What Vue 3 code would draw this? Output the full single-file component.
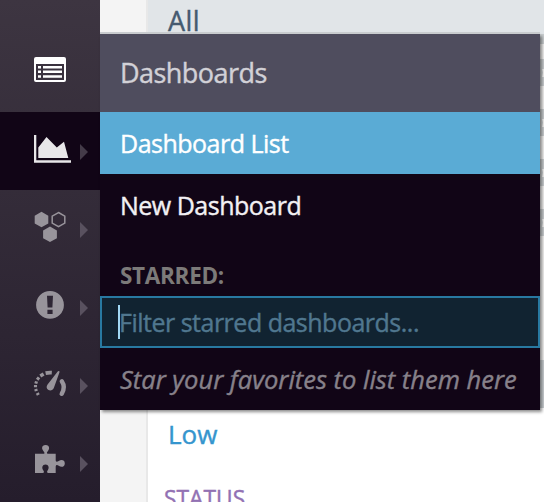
<script setup>
const items = [
  { id: 'events', arrow: false },
  { id: 'dashboards', arrow: true, active: true },
  { id: 'infrastructure', arrow: true },
  { id: 'monitors', arrow: true },
  { id: 'metrics', arrow: true },
  { id: 'integrations', arrow: true },
]
</script>

<template>
  <div class="screen">
    <nav class="sidebar">
      <a v-for="item in items" :key="item.id" class="nav-item" :class="{ active: item.active }">
        <svg v-if="item.id === 'events'" class="icon" viewBox="0 0 100 78">
          <path fill="#fff" fill-rule="evenodd" d="M36 23h28a2 2 0 0 1 2 2v21a2 2 0 0 1-2 2H36a2 2 0 0 1-2-2V25a2 2 0 0 1 2-2zM36 30v16h28V30z" />
          <path fill="#fff" d="M38 32h3v2.5h-3zM38 36.5h3V39h-3zM38 41.2h3v2.5h-3zM43 32h19v2.5H43zM43 36.5h19V39H43zM43 41.2h19v2.5H43z" />
        </svg>
        <svg v-else-if="item.id === 'dashboards'" class="icon" viewBox="0 0 100 78">
          <path fill="#e8e7e9" d="M34 23h2.3v25.3H71v2.4H34zM38.3 46V35.5L46.5 25l10.3 10.4 7.2-5.6L68.3 46z" />
        </svg>
        <svg v-else-if="item.id === 'infrastructure'" class="icon" viewBox="0 0 100 78">
          <g fill="#98949b">
            <path d="M41.5 21.8l6.8 3.9v7.7l-6.8 3.9-6.8-3.9v-7.7zM50 36.6l6.9 3.9v7.7L50 52.1l-6.9-3.9v-7.7z" />
            <path fill="none" stroke="#98949b" stroke-width="1.5" d="M58.5 22.5l6.3 3.6v7l-6.3 3.6-6.3-3.6v-7z" />
          </g>
        </svg>
        <svg v-else-if="item.id === 'monitors'" class="icon" viewBox="0 0 100 78">
          <path fill="#98949b" fill-rule="evenodd" d="M50 23a13.9 13.9 0 1 1 0 27.8 13.9 13.9 0 0 1 0-27.8zM47 27.7l.6 11.8h4.8l.6-11.8zM47.4 41.7v4.2h5.2v-4.2z" />
        </svg>
        <svg v-else-if="item.id === 'metrics'" class="icon" viewBox="0 0 100 78">
          <path fill="#98949b" d="M59 25.1c.6.3.6.8.4 1.4l-5.5 15.2c-1 2.6-3.5 3.4-5.4 2.3-2-1.1-2.4-3.4-1.1-5.3l10.3-13.1c.4-.6.8-.8 1.3-.5z" />
          <g fill="none" stroke="#98949b">
            <path stroke-width="3.8" d="M45.6 27.1q3-.6 6.2-.4" />
            <path stroke-width="3.5" d="M40.3 30.1l3.3-2" />
            <path stroke-width="3.1" d="M37.2 33.7l1.8-2.3M35.8 37.6l.7-2.2M35.5 41.3v-2.3M36.3 45.1l-.6-2.1M38.3 49l-1-2" />
            <path stroke-width="4.4" stroke-linecap="round" d="M61.8 35.2c2.8 4.1 2.5 8.4-.1 12.6" />
          </g>
        </svg>
        <svg v-else class="icon" viewBox="0 0 100 78">
          <path fill="#98949b" d="M35 29.8h8.5c1.4 0 1.1-1.4.2-2.4-1.9-2.1-2-4.1-.9-5.4 1.4-1.5 4.2-1.5 5.6 0 1.2 1.4.9 3.5-.8 5.5-1 1.2-1 2.3.3 2.3h7.8v6.3c0 2 1.2 2.1 3 .9 2.6-1.7 6.1-1.1 6.1 2.4s-3.4 4.4-6.1 2.4c-1.7-1.2-3-.8-3 1.1v6h-7.6c-1.5 0-1.2-1.3-.2-2.8 1.5-2.3.8-5.5-2.4-5.5s-4 3.3-2.3 5.6c1.2 1.6 1 2.7-.6 2.7H35z" />
        </svg>
        <i v-if="item.arrow" class="arrow"></i>
      </a>
    </nav>

    <main class="content">
      <section class="facets">
        <div class="facet-all">All</div>
        <div class="facet-low">Low</div>
        <div class="facet-title">STATUS</div>
      </section>
      <div class="event-edge">
        <i class="grip first"></i>
        <i v-for="n in 4" :key="n" class="grip notched"></i>
        <i class="edge-block"></i>
      </div>
    </main>

    <section class="flyout">
      <header class="flyout-title">Dashboards</header>
      <a class="entry selected">Dashboard List</a>
      <a class="entry">New Dashboard</a>
      <div class="starred">STARRED:</div>
      <div class="filter"><i class="caret"></i><span>Filter starred dashboards...</span></div>
      <div class="hint"><em>Star your favorites to list them here</em></div>
    </section>
  </div>
</template>

<style>
body { overflow: hidden; }
</style>

<style scoped>
.screen {
  position: relative;
  display: flex;
  width: 544px;
  height: 502px;
  overflow: hidden;
  background: #f4f4f4;
  font-family: "Open Sans", "Noto Sans", sans-serif;
  font-size: 26px;
  white-space: nowrap;
  -webkit-text-stroke: 0.4px currentColor;
}
.sidebar {
  box-sizing: border-box;
  width: 100px;
  flex: none;
  padding-top: 34px;
  background: linear-gradient(#3d3541, #251d2c);
}
.nav-item { display: flex; position: relative; height: 78px; }
.nav-item.active { background: #110516; }
.icon { width: 100px; height: 78px; display: block; }
.arrow {
  position: absolute;
  left: 80px;
  top: 32px;
  border: solid transparent;
  border-width: 8px 0 8px 8px;
  border-left-color: #59515f;
}
.active .arrow { border-left-color: #443b49; }
.content { display: flex; flex: 1; padding-left: 46px; }
.facets {
  width: 392px;
  flex: none;
  border-left: 2px solid #e8e8e8;
  background: #fff;
}
.facet-all {
  height: 390px;
  padding-left: 20px;
  line-height: 41px;
  font-size: 27px;
  letter-spacing: 0.4px;
  color: #455a70;
  background: #e1e5e8;
}
.facet-low { height: 90px; padding: 26px 0 0 20px; line-height: 36px; color: #3595ce; box-sizing: border-box; }
.facet-title { padding-left: 16px; line-height: 38px; font-size: 22.8px; color: #9271b3; }
.event-edge { flex: 1; background: linear-gradient(#e1e5e8 34px, #f2f1f0 34px, #f2f1f0 360px, #fff 360px); }
.grip { display: block; height: 27px; margin-bottom: 23px; background: #c9cdcf; }
.first { height: 10px; margin: 34px 0 15px; }
.notched { clip-path: polygon(0 0, 100% 0, 100% 37%, 50% 37%, 75% 50%, 50% 67%, 100% 67%, 100% 100%, 0 100%); }
.edge-block { display: block; height: 48px; margin-top: 124px; background: #c8cdd0; }
.flyout {
  position: absolute;
  left: 100px;
  top: 34px;
  width: 440px;
  height: 376px;
  background: #110516;
  box-shadow: 0 -2px 0 #c9cccf, 2px 2px 3px rgba(0, 0, 0, .45);
}
.flyout-title {
  height: 78px;
  padding-left: 20px;
  line-height: 77px;
  font-size: 27px;
  letter-spacing: -0.55px;
  color: #d2d1d7;
  background: #4f4d5e;
}
.entry {
  display: block;
  height: 62px;
  padding-left: 20px;
  line-height: 62px;
  font-size: 25px;
  letter-spacing: -0.5px;
  color: #f2f0f3;
}
.selected { color: #fff; background: #5aabd5; }
.starred {
  height: 60px;
  padding-left: 20px;
  line-height: 80px;
  font-size: 22.5px;
  letter-spacing: -0.3px;
  font-weight: 700;
  color: #7c7a79;
  -webkit-text-stroke: 0;
}
.filter {
  display: flex;
  align-items: center;
  box-sizing: border-box;
  height: 52px;
  padding-left: 16px;
  border: 2px solid #2879a1;
  background: #112331;
  color: #50778f;
  font-size: 25px;
  letter-spacing: -0.5px;
}
.caret { width: 2px; height: 34px; margin-right: -1px; background: #a0d8f4; }
.hint { padding-left: 20px; line-height: 62px; font-size: 25.5px; color: #87818a; }
</style>
